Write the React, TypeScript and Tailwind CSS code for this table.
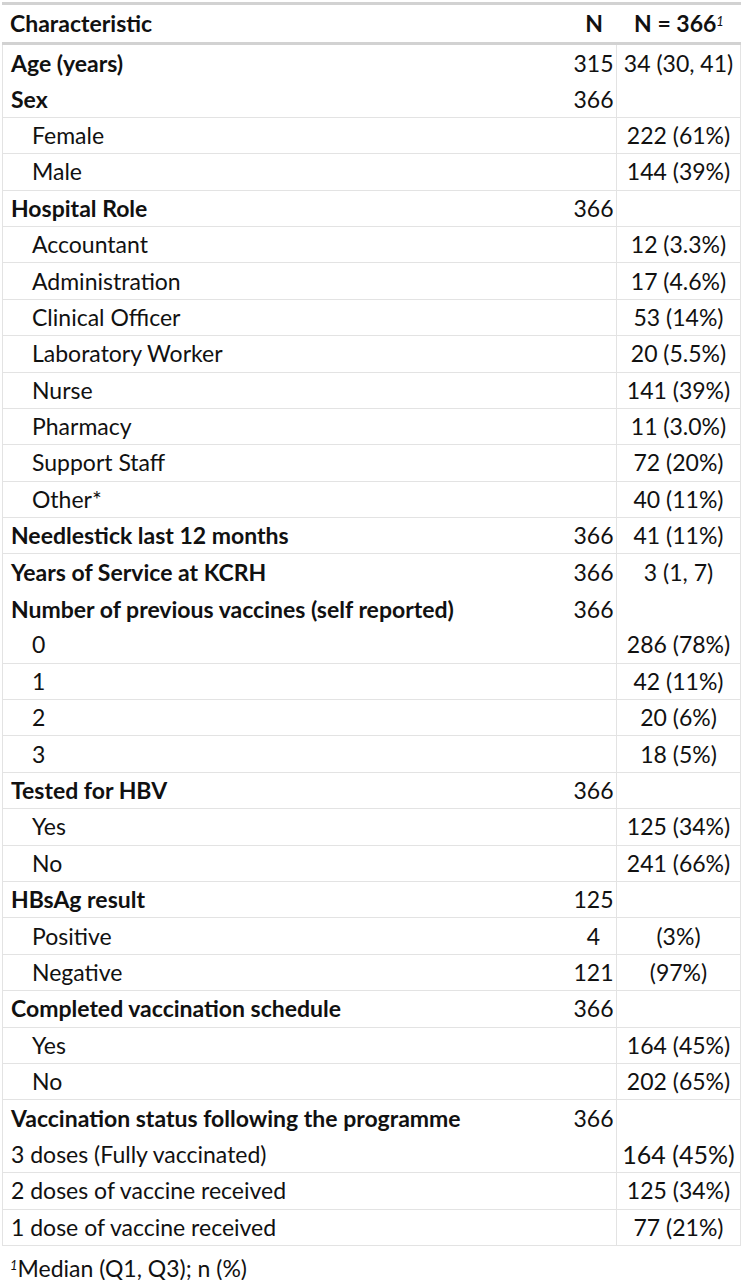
import React from "react";

type Row = {
  label: string;
  n?: string;
  stat?: string;
  bold?: boolean;
  indent?: boolean;
  noLine?: boolean;
  big?: boolean;
};

const rows: Row[] = [
  { label: "Age (years)", n: "315", stat: "34 (30, 41)", bold: true, noLine: true },
  { label: "Sex", n: "366", bold: true },
  { label: "Female", stat: "222 (61%)", indent: true },
  { label: "Male", stat: "144 (39%)", indent: true },
  { label: "Hospital Role", n: "366", bold: true },
  { label: "Accountant", stat: "12 (3.3%)", indent: true },
  { label: "Administration", stat: "17 (4.6%)", indent: true },
  { label: "Clinical Officer", stat: "53 (14%)", indent: true },
  { label: "Laboratory Worker", stat: "20 (5.5%)", indent: true },
  { label: "Nurse", stat: "141 (39%)", indent: true },
  { label: "Pharmacy", stat: "11 (3.0%)", indent: true },
  { label: "Support Staff", stat: "72 (20%)", indent: true },
  { label: "Other*", stat: "40 (11%)", indent: true },
  { label: "Needlestick last 12 months", n: "366", stat: "41 (11%)", bold: true },
  { label: "Years of Service at KCRH", n: "366", stat: "3 (1, 7)", bold: true, noLine: true },
  { label: "Number of previous vaccines (self reported)", n: "366", bold: true, noLine: true },
  { label: "0", stat: "286 (78%)", indent: true },
  { label: "1", stat: "42 (11%)", indent: true },
  { label: "2", stat: "20 (6%)", indent: true },
  { label: "3", stat: "18 (5%)", indent: true },
  { label: "Tested for HBV", n: "366", bold: true },
  { label: "Yes", stat: "125 (34%)", indent: true },
  { label: "No", stat: "241 (66%)", indent: true },
  { label: "HBsAg result", n: "125", bold: true },
  { label: "Positive", n: "4", stat: "(3%)", indent: true },
  { label: "Negative", n: "121", stat: "(97%)", indent: true },
  { label: "Completed vaccination schedule", n: "366", bold: true },
  { label: "Yes", stat: "164 (45%)", indent: true },
  { label: "No", stat: "202 (65%)", indent: true },
  { label: "Vaccination status following the programme", n: "366", bold: true, noLine: true },
  { label: "3 doses (Fully vaccinated)", stat: "164 (45%)", big: true },
  { label: "2 doses of vaccine received", stat: "125 (34%)" },
  { label: "1 dose of vaccine received", stat: "77 (21%)" },
];

const font = { fontFamily: "Lato, 'Open Sans', sans-serif" };

export default function App() {
  return (
    <div className="w-[743px] bg-white pt-[2px] text-[23px] leading-none text-[#111]" style={font}>
      {/* Header */}
      <div className="mx-[2px] border-t-[3px] border-b-[3px] border-[#d2d2d2]">
        <div className="flex h-[37px] items-center font-bold">
          <div className="flex-1 pl-[8px]">Characteristic</div>
          <div className="w-[46px] text-center">N</div>
          <div className="w-[124px] text-center">
            N = 366<sup className="text-[13px] font-normal italic">1</sup>
          </div>
        </div>
      </div>
      {/* Body */}
      <div className="mx-[2px] border-l border-r border-[#e3e3e3]">
        {rows.map((r, i) => (
          <div
            key={i}
            className={`flex h-[36.4px] items-center ${r.noLine ? "" : "border-b border-[#e3e3e3]"}`}
          >
            <div
              className={`flex-1 whitespace-nowrap ${r.indent ? "pl-[29px]" : "pl-[8px]"} ${r.bold ? "font-bold" : ""}`}
            >
              {r.label}
            </div>
            <div className="flex h-full w-[46px] items-center justify-center border-r border-[#e3e3e3]">
              {r.n}
            </div>
            <div className={`w-[123px] whitespace-nowrap text-center ${r.big ? "text-[25px]" : ""}`}>
              {r.stat}
            </div>
          </div>
        ))}
      </div>
      {/* Footnote */}
      <div className="pl-[10px] pt-[9px] leading-[26px]">
        <sup className="text-[13px] italic">1</sup>Median (Q1, Q3); n (%)
      </div>
    </div>
  );
}
